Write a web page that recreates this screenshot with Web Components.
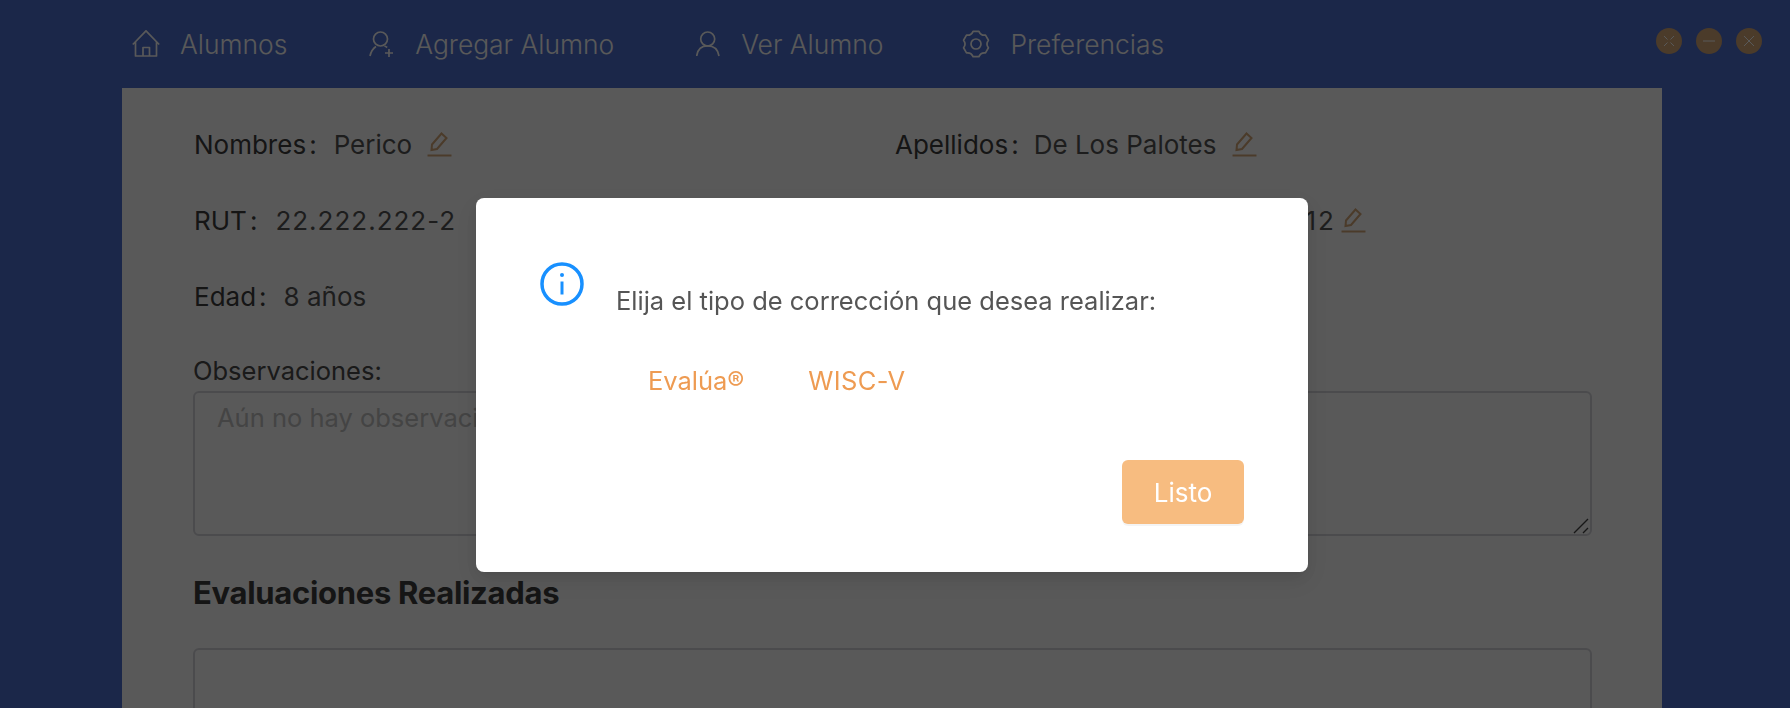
<!DOCTYPE html>
<html lang="es">
<head>
<meta charset="utf-8">
<title>Alumnos</title>
<style>
  html,body{ margin:0; height:100%; overflow:hidden; }
  body{ font-family:Inter,"Liberation Sans",sans-serif; background:#4d6fd1; }
</style>
</head>
<body>
<app-shell>
  <top-nav slot="nav">
    <nav-item icon="home">Alumnos</nav-item>
    <nav-item icon="add">Agregar Alumno</nav-item>
    <nav-item icon="user">Ver Alumno</nav-item>
    <nav-item icon="gear" style="margin-left:-3px">Preferencias</nav-item>
    <win-dot slot="controls" kind="expand"></win-dot>
    <win-dot slot="controls" kind="min"></win-dot>
    <win-dot slot="controls" kind="close"></win-dot>
  </top-nav>
  <student-panel slot="main">
    <info-field label="Nombres" editable style="--pencil-gap:15px">Perico</info-field>
    <info-field label="Apellidos" editable style="--label-gap:15px">De Los Palotes</info-field>
    <info-field label="RUT" style="--label-gap:18px"><span style="letter-spacing:1px">22.222.222-2</span></info-field>
    <info-field label="Fecha de Nacimiento" editable style="--label-gap:23px;--pencil-gap:5px"><span style="letter-spacing:1.8px">12/12/2012</span></info-field>
    <info-field label="Edad">8 años</info-field>
  </student-panel>
</app-shell>
<choice-modal>
  Elija el tipo de corrección que desea realizar:
  <link-button slot="options">Evalúa®</link-button>
  <link-button slot="options" style="letter-spacing:.35px">WISC-V</link-button>
  <span slot="action">Listo</span>
</choice-modal>

<script>
(function(){
  const ICONS = {
    home:{ w:28, d:'<path d="M.8 14.500 14 .8l13.200 13.700M3.500 11.800V26h21V11.800M11 26v-8.500h6.500V26"/>' },
    add:{ w:26, d:'<circle cx="11.500" cy="9" r="7"/><path d="M1 26c1-4.500 3-7.500 6-9.500M15.500 16c1 .4 2 1 2.700 1.500M16 23h8M20 19v8"/>' },
    user:{ w:25, d:'<circle cx="11.700" cy="9" r="7"/><path d="M.7 26C1.500 20 5 15.900 11.700 15.900S22 20 23 26"/>' },
    gear:{ w:28, d:'<path d="M11.070 1.340h5.860Q18.750 5.770 23.500 5.130L26.430 10.200Q23.500 14 26.430 17.800L23.500 22.870Q18.750 22.230 16.930 26.660H11.070Q9.250 22.230 4.500 22.870L1.570 17.800Q4.500 14 1.570 10.200L4.500 5.130Q9.250 5.770 11.070 1.340z"/><circle cx="14" cy="14" r="5"/>' }
  };

  class AppShell extends HTMLElement{
    connectedCallback(){
      this.attachShadow({mode:'open'});
      this.shadowRoot.innerHTML = `
        <style>
          :host{ display:flex; flex-direction:column; height:708px; overflow:hidden; }
          .main{ flex:1; min-height:0; display:flex; padding:0 128px 0 122px; }
          ::slotted([slot=main]){ flex:1; }
        </style>
        <slot name="nav"></slot>
        <div class="main"><slot name="main"></slot></div>
      `;
    }
  }

  class TopNav extends HTMLElement{
    connectedCallback(){
      this.attachShadow({mode:'open'});
      this.shadowRoot.innerHTML = `
        <style>
          :host{ display:flex; align-items:center; height:88px; padding:0 28px 0 132px; }
          .items{ display:flex; align-items:center; gap:82px; flex:1; }
          .controls{ display:flex; gap:14px; margin-top:-6px; }
        </style>
        <div class="items"><slot></slot></div>
        <div class="controls"><slot name="controls"></slot></div>
      `;
    }
  }

  class NavItem extends HTMLElement{
    connectedCallback(){
      const icon = ICONS[this.getAttribute('icon')];
      this.attachShadow({mode:'open'});
      this.shadowRoot.innerHTML = `
        <style>
          :host{ display:flex; align-items:center; gap:20px; color:#fff; font-size:26.4px; font-weight:300; }
          svg{ width:${icon.w}px; height:28px; fill:none; stroke:#fff; stroke-width:1.7; stroke-linejoin:round; }
        </style>
        <svg viewBox="0 0 ${icon.w} 28">${icon.d}</svg>
        <span><slot></slot></span>
      `;
    }
  }

  class WinDot extends HTMLElement{
    connectedCallback(){
      const marks = {
        expand:'<path d="M2 2l3.500 3.500M12 2 8.500 5.500M2 12l3.500-3.500M12 12 8.500 8.500"/>',
        min:'<path d="M1 7h12"/>',
        close:'<path d="M2 2l10 10M12 2 2 12"/>'
      };
      this.attachShadow({mode:'open'});
      this.shadowRoot.innerHTML = `
        <style>
          :host{ display:flex; align-items:center; justify-content:center; width:26px; height:26px; border-radius:50%; background:#d6a878; }
          svg{ width:14px; height:14px; fill:none; stroke:#fff; stroke-width:1; }
        </style>
        <svg viewBox="0 0 14 14">${marks[this.getAttribute('kind')]}</svg>
      `;
    }
  }

  class InfoField extends HTMLElement{
    connectedCallback(){
      const pencil = this.hasAttribute('editable') ? `
        <svg viewBox="0 0 25 25"><path d="M4.500 18 5 12.500 14.500 1.500 19.500 6 10 17z"/><path d="M.5 23.500h24"/></svg>` : '';
      this.attachShadow({mode:'open'});
      this.shadowRoot.innerHTML = `
        <style>
          :host{ display:flex; align-items:center; height:30px; font-size:26px; color:#555; white-space:nowrap; }
          .label{ color:#3c3c3c; margin-right:var(--label-gap,17px); }
          .label i{ font-style:normal; margin-left:3px; }
          svg{ width:25px; height:25px; margin-left:var(--pencil-gap,16px); fill:none; stroke:#d6a878; stroke-width:2; flex:none; }
        </style>
        <span class="label">${this.getAttribute('label')}<i>:</i></span>
        <span><slot></slot></span>
        ${pencil}
      `;
    }
  }

  class StudentPanel extends HTMLElement{
    connectedCallback(){
      this.attachShadow({mode:'open'});
      this.shadowRoot.innerHTML = `
        <style>
          :host{ display:block; background:#fff; padding:41px 70px 0 72px; color:#555; }
          .fields{ display:grid; grid-template-columns:701px 1fr; row-gap:46px; margin-bottom:45px; }
          label{ display:block; font-size:25.5px; margin:0 0 5px -1px; color:#4a4a4a; line-height:30px; }
          .obs{ position:relative; width:calc(100% + 1px); margin-left:-1px; }
          textarea{ display:block; box-sizing:border-box; width:100%; height:145px; margin:0; padding:8px 22px; resize:none;
            border:2px solid #d7d7dd; border-radius:6px; font:25.5px/34px Inter,"Liberation Sans",sans-serif; outline:none; }
          textarea::placeholder{ color:#c2c2c2; }
          .grip{ position:absolute; right:3px; bottom:2px; width:16px; height:16px; fill:none; stroke:#444; stroke-width:1.4; }
          h2{ font-size:31px; font-weight:700; color:#3c3c3c; margin:37px 0 0 -1px; line-height:40px; letter-spacing:-.3px; }
          .list{ height:140px; margin:35px 0 0 -1px; border:2px solid #d7d7dd; border-radius:6px; }
        </style>
        <div class="fields"><slot></slot></div>
        <label for="obs">Observaciones:</label>
        <div class="obs">
          <textarea id="obs" placeholder="Aún no hay observaciones"></textarea>
          <svg class="grip" viewBox="0 0 16 16"><path d="M1 15 15 1M10 15l5-5"/></svg>
        </div>
        <h2>Evaluaciones Realizadas</h2>
        <div class="list"></div>
      `;
    }
  }

  class LinkButton extends HTMLElement{
    connectedCallback(){
      this.attachShadow({mode:'open'});
      this.shadowRoot.innerHTML = `
        <style>:host{ display:inline-block; color:#ee9b52; font-size:25.5px; line-height:30px; cursor:pointer; }</style>
        <slot></slot>
      `;
    }
  }

  class ChoiceModal extends HTMLElement{
    connectedCallback(){
      this.attachShadow({mode:'open'});
      this.shadowRoot.innerHTML = `
        <style>
          :host{ position:fixed; inset:0; background:rgba(0,0,0,.65); font-family:Inter,"Liberation Sans",sans-serif; }
          .box{ position:absolute; left:476px; top:198px; width:832px; height:374px; box-sizing:border-box; padding:64px 64px 48px;
            display:flex; flex-direction:column; background:#fff; border-radius:8px;
            box-shadow:0 6px 16px rgba(0,0,0,.08),0 3px 6px -4px rgba(0,0,0,.12),0 9px 28px 8px rgba(0,0,0,.05); }
          .head{ display:flex; align-items:flex-start; gap:32px; color:#555; font-size:25.5px; line-height:30px; }
          .head svg{ width:44px; height:44px; flex:none; fill:none; stroke:#1890ff; }
          .head span{ margin-top:24px; }
          .options{ display:flex; gap:64px; margin:50px 0 0 108px; }
          .foot{ margin-top:auto; display:flex; justify-content:flex-end; }
          button{ width:122px; height:64px; border:0; border-radius:6px; background:#f7bc80; color:#fff; font:400 26px Inter,"Liberation Sans",sans-serif;
            box-shadow:0 2px 0 rgba(0,0,0,.045); }
        </style>
        <div class="box">
          <div class="head">
            <svg viewBox="0 0 44 44"><circle cx="22" cy="22" r="20" stroke-width="3.500"/><path d="M22 19.500v13" stroke-width="3"/><circle cx="22" cy="13" r="2" fill="#1890ff" stroke="none"/></svg>
            <span><slot></slot></span>
          </div>
          <div class="options"><slot name="options"></slot></div>
          <div class="foot"><button><slot name="action"></slot></button></div>
        </div>
      `;
    }
  }

  customElements.define('app-shell', AppShell);
  customElements.define('top-nav', TopNav);
  customElements.define('nav-item', NavItem);
  customElements.define('win-dot', WinDot);
  customElements.define('info-field', InfoField);
  customElements.define('student-panel', StudentPanel);
  customElements.define('link-button', LinkButton);
  customElements.define('choice-modal', ChoiceModal);
})();
</script>
</body>
</html>
